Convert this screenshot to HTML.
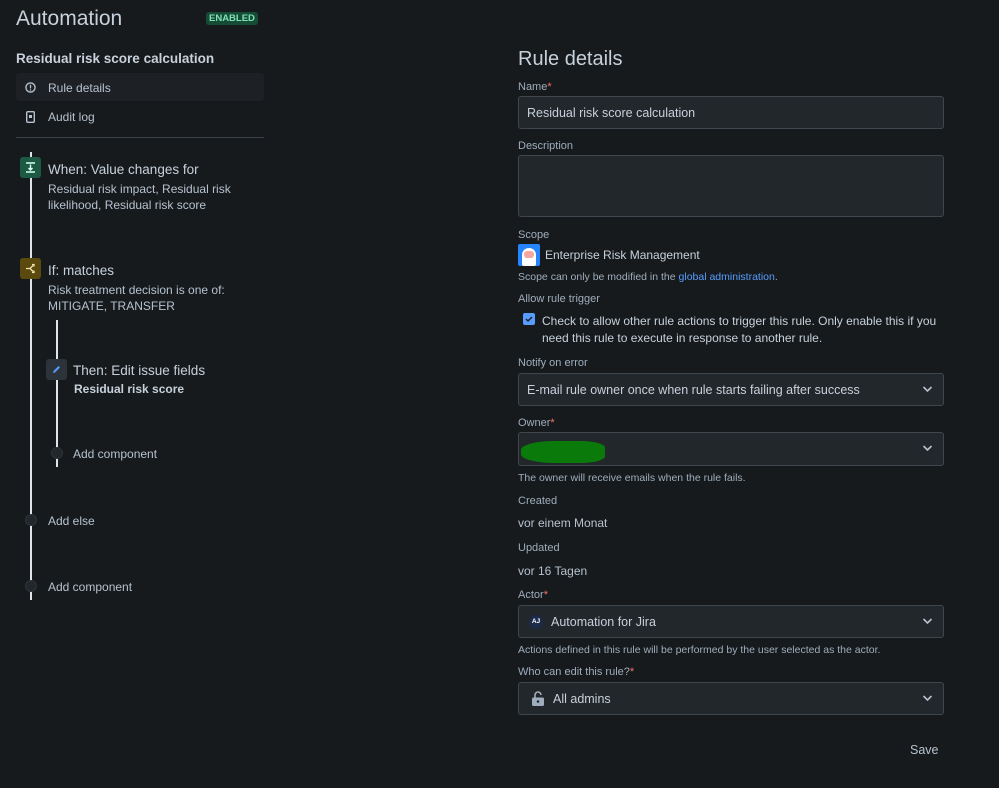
<!DOCTYPE html>
<html><head><style>
*{box-sizing:border-box;margin:0;padding:0}
body{width:999px;height:788px;background:#161a1d;color:#b6c2cf;font-family:"Liberation Sans",sans-serif;position:relative;overflow:hidden;font-size:12px}
.a{position:absolute;white-space:nowrap}
.inp{position:absolute;left:518px;width:426px;background:#22272b;border:1px solid #3f464d;border-radius:3px;font-size:12.5px;color:#c7d1db;padding-left:8px;display:flex;align-items:center}
.chev{position:absolute;right:10px;top:50%;margin-top:-5px}
.lbl{position:absolute;left:518px;font-size:11px;color:#9fadbc}
.req{color:#f87168}
.help{position:absolute;left:518px;font-size:10.5px;color:#9fadbc}
.dot{position:absolute;width:12px;height:12px;border-radius:50%;background:#22272b;border:1px solid #2c333a}
</style></head><body>
<div class="a" style="left:16px;top:7px;font-size:21px;color:#c7d1db">Automation</div>
<div class="a" style="left:206px;top:12px;font-size:9.5px;font-weight:bold;color:#7ee2b8;background:#164b35;padding:1px 3px;border-radius:3px">ENABLED</div>
<div class="a" style="left:16px;top:51px;font-size:13.5px;font-weight:bold;color:#c7d1db">Residual risk score calculation</div>
<div class="a" style="left:16px;top:73px;width:248px;height:28px;background:#1d2125;border-radius:3px"></div>
<svg class="a" style="left:25px;top:82px" width="11" height="11" viewBox="0 0 12 12"><circle cx="6" cy="6" r="5" fill="none" stroke="#b6c2cf" stroke-width="1.5"/><rect x="5.3" y="3" width="1.4" height="4" fill="#b6c2cf"/><rect x="5.3" y="8" width="1.4" height="1.4" fill="#b6c2cf"/></svg>
<div class="a" style="left:48px;top:81px;font-size:12px">Rule details</div>
<svg class="a" style="left:26px;top:111px" width="9" height="12" viewBox="0 0 9 12"><rect x="0.7" y="0.7" width="7.6" height="10.6" rx="1" fill="none" stroke="#b6c2cf" stroke-width="1.4"/><rect x="3" y="4" width="3" height="3" fill="#b6c2cf"/></svg>
<div class="a" style="left:48px;top:110px;font-size:12px">Audit log</div>
<div class="a" style="left:16px;top:137px;width:248px;height:1px;background:#3b4148"></div>
<div class="a" style="left:30px;top:152px;width:2px;height:448px;background:#dee4ea"></div>
<div class="a" style="left:56px;top:320px;width:2px;height:147px;background:#dee4ea"></div>
<div class="a" style="left:20px;top:157px;width:21px;height:21px;background:#1c5a43;border-radius:3px"></div>
<svg class="a" style="left:25px;top:162px" width="11" height="11" viewBox="0 0 11 11"><path d="M1 1H10M1 10H10M5.5 2.5V8M3.5 6L5.5 8L7.5 6" stroke="#dcfff1" stroke-width="1.4" fill="none"/></svg>
<div class="a" style="left:48px;top:162px;font-size:13.5px;color:#c7d1db">When: Value changes for</div>
<div class="a" style="left:48px;top:181px;line-height:16px">Residual risk impact, Residual risk<br>likelihood, Residual risk score</div>
<div class="a" style="left:20px;top:258px;width:21px;height:21px;background:#5a4a0e;border-radius:3px"></div>
<svg class="a" style="left:25px;top:263px" width="11" height="11" viewBox="0 0 11 11"><path d="M1 5.5H5L8 2.5M5 5.5L8 8.5M7 1.5H9V3.5M7 9.5H9V7.5" stroke="#f5e3b0" stroke-width="1.3" fill="none"/></svg>
<div class="a" style="left:48px;top:263px;font-size:13.5px;color:#c7d1db">If: matches</div>
<div class="a" style="left:48px;top:282px;line-height:16px">Risk treatment decision is one of:<br>MITIGATE, TRANSFER</div>
<div class="a" style="left:46px;top:359px;width:21px;height:21px;background:#2c333a;border-radius:3px"></div>
<svg class="a" style="left:51px;top:364px" width="11" height="11" viewBox="0 0 11 11"><path d="M2 9L2.5 7L7.5 2L9 3.5L4 8.5Z" fill="#579dff"/></svg>
<div class="a" style="left:73px;top:363px;font-size:13.5px;color:#c7d1db">Then: Edit issue fields</div>
<div class="a" style="left:74px;top:382px;font-weight:bold;color:#c7d1db">Residual risk score</div>
<div class="dot" style="left:51px;top:447px"></div>
<div class="a" style="left:73px;top:447px">Add component</div>
<div class="dot" style="left:25px;top:514px"></div>
<div class="a" style="left:48px;top:514px">Add else</div>
<div class="dot" style="left:25px;top:580px"></div>
<div class="a" style="left:48px;top:580px">Add component</div>
<div class="a" style="left:518px;top:48px;font-size:20px;color:#c7d1db">Rule details</div>
<div class="lbl" style="top:81px">Name<span class="req">*</span></div>
<div class="inp" style="top:96px;height:33px">Residual risk score calculation</div>
<div class="lbl" style="top:140px">Description</div>
<div class="inp" style="top:155px;height:62px"></div>
<div class="lbl" style="top:229px">Scope</div>
<div class="a" style="left:518px;top:244px;width:22px;height:22px;background:#2684ff;border-radius:2px;overflow:hidden"><div style="position:absolute;left:4px;top:4px;width:14px;height:18px;background:#fff;border-radius:7px 7px 2px 2px"></div><div style="position:absolute;left:6px;top:7px;width:10px;height:7px;background:#f4a7a0;border-radius:3px"></div></div>
<div class="a" style="left:545px;top:248px;font-size:12px;color:#c7d1db">Enterprise Risk Management</div>
<div class="help" style="top:271px">Scope can only be modified in the <span style="color:#579dff">global administration</span>.</div>
<div class="lbl" style="top:293px">Allow rule trigger</div>
<div class="a" style="left:523px;top:313px;width:12px;height:12px;background:#579dff;border-radius:2px"></div>
<svg class="a" style="left:524px;top:314px" width="10" height="10" viewBox="0 0 10 10"><path d="M2 5L4 7L8 3" stroke="#1d2125" stroke-width="1.5" fill="none"/></svg>
<div class="a" style="left:542px;top:313px;font-size:12px;line-height:17px;color:#c7d1db">Check to allow other rule actions to trigger this rule. Only enable this if you<br>need this rule to execute in response to another rule.</div>
<div class="lbl" style="top:357px">Notify on error</div>
<div class="inp" style="top:373px;height:33px">E-mail rule owner once when rule starts failing after success<svg class="chev" width="11" height="8" viewBox="0 0 11 8"><path d="M1.5 2L5.5 6L9.5 2" stroke="#b6c2cf" stroke-width="1.6" fill="none"/></svg></div>
<div class="lbl" style="top:417px">Owner<span class="req">*</span></div>
<div class="inp" style="top:432px;height:34px"><div style="position:absolute;left:2px;top:8px;width:84px;height:22px;background:#0a7a0a;border-radius:40% 30% 30% 40%"></div><svg class="chev" width="11" height="8" viewBox="0 0 11 8"><path d="M1.5 2L5.5 6L9.5 2" stroke="#b6c2cf" stroke-width="1.6" fill="none"/></svg></div>
<div class="help" style="top:472px">The owner will receive emails when the rule fails.</div>
<div class="lbl" style="top:495px">Created</div>
<div class="a" style="left:518px;top:516px;font-size:12px">vor einem Monat</div>
<div class="lbl" style="top:542px">Updated</div>
<div class="a" style="left:518px;top:564px;font-size:12px">vor 16 Tagen</div>
<div class="lbl" style="top:589px">Actor<span class="req">*</span></div>
<div class="inp" style="top:605px;height:33px"><span style="display:inline-block;width:14px;height:14px;border-radius:50%;background:#1c2b4a;color:#fff;font-size:6.5px;font-weight:bold;text-align:center;line-height:14px;margin-right:8px;margin-left:2px">AJ</span>Automation for Jira<svg class="chev" width="11" height="8" viewBox="0 0 11 8"><path d="M1.5 2L5.5 6L9.5 2" stroke="#b6c2cf" stroke-width="1.6" fill="none"/></svg></div>
<div class="help" style="top:644px">Actions defined in this rule will be performed by the user selected as the actor.</div>
<div class="lbl" style="top:666px">Who can edit this rule?<span class="req">*</span></div>
<div class="inp" style="top:682px;height:33px"><svg style="margin:0 9px 0 5px" width="12" height="15" viewBox="0 0 12 15"><path d="M3 7V4a3 3 0 0 1 6 0" stroke="#9fadbc" stroke-width="1.6" fill="none"/><rect x="0" y="6.5" width="12" height="8.5" rx="1.5" fill="#9fadbc"/><circle cx="6" cy="10.5" r="1.3" fill="#22272b"/></svg>All admins<svg class="chev" width="11" height="8" viewBox="0 0 11 8"><path d="M1.5 2L5.5 6L9.5 2" stroke="#b6c2cf" stroke-width="1.6" fill="none"/></svg></div>
<div class="a" style="left:910px;top:743px;font-size:12.5px;color:#b6c2cf">Save</div>
</body></html>
